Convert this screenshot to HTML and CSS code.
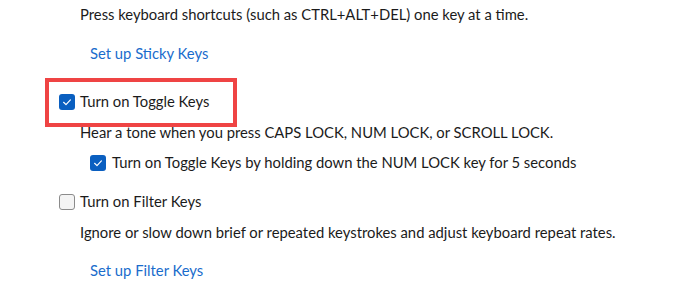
FILE: index.html
```html
<!DOCTYPE html>
<html>
<head>
<meta charset="utf-8">
<link rel="stylesheet" href="styles.css">
</head>
<body>
<div class="page">
  <section class="group">
    <p class="desc first">Press keyboard shortcuts (such as CTRL+ALT+DEL) one key at a time.</p>
    <a class="link link-sticky">Set up Sticky Keys</a>
  </section>

  <section class="group toggle">
    <div class="option title">
      <span class="highlight"></span>
      <span class="box checked"><svg viewBox="0 0 16 16" width="16" height="16"><path d="M4.6 8.3 L7 10.6 L11.4 5.9" fill="none" stroke="#fff" stroke-width="1.2" stroke-linecap="round" stroke-linejoin="round"/></svg></span>
      <span class="label">Turn on Toggle Keys</span>
    </div>
    <p class="desc after-title">Hear a tone when you press CAPS LOCK, NUM LOCK, or SCROLL LOCK.</p>
    <div class="option sub">
      <span class="box checked"><svg viewBox="0 0 16 16" width="16" height="16"><path d="M4.6 8.3 L7 10.6 L11.4 5.9" fill="none" stroke="#fff" stroke-width="1.2" stroke-linecap="round" stroke-linejoin="round"/></svg></span>
      <span class="label">Turn on Toggle Keys by holding down the NUM LOCK key for 5 seconds</span>
    </div>
  </section>

  <section class="group filter">
    <div class="option title">
      <span class="box"></span>
      <span class="label">Turn on Filter Keys</span>
    </div>
    <p class="desc after-title">Ignore or slow down brief or repeated keystrokes and adjust keyboard repeat rates.</p>
    <a class="link link-filter">Set up Filter Keys</a>
  </section>
</div>
</body>
</html>
```

FILE: styles.css
```css
html, body {
  margin: 0;
  padding: 0;
  background: #ffffff;
}

body {
  font-family: "Lato", "Noto Sans", sans-serif;
  font-size: 14.8px;
  line-height: 20px;
  color: #1b1b1b;
}

.page {
  padding: 4px 0 0 0;
  display: flex;
  flex-direction: column;
}

.group {
  display: flex;
  flex-direction: column;
  align-items: flex-start;
}

p {
  margin: 0;
}

.desc {
  padding-left: 80px;
  white-space: nowrap;
}

.link {
  display: block;
  padding-left: 90px;
  color: #1a6ccc;
  text-decoration: none;
  cursor: pointer;
}

.link-sticky {
  margin-top: 19px;
}

.link-filter {
  margin-top: 18px;
}

.toggle {
  margin-top: 28px;
}

.filter {
  margin-top: 19px;
}

.option {
  display: flex;
  align-items: center;
  gap: 5px;
  height: 20px;
  white-space: nowrap;
}

.option.title {
  position: relative;
  margin-left: 59px;
}

.option.sub {
  margin-top: 10px;
  margin-left: 90px;
  gap: 6px;
}

.after-title {
  margin-top: 11px;
}

.box {
  box-sizing: border-box;
  width: 16px;
  height: 16px;
  border-radius: 3px;
  border: 1px solid #8b8b8b;
  background: #f4f4f4;
  display: flex;
  align-items: center;
  justify-content: center;
  flex: none;
  margin-top: 2px;
}

.box.checked {
  border: none;
  background: #0a5fc0;
}

.box svg {
  display: block;
}

.highlight {
  position: absolute;
  left: -14px;
  top: -13px;
  width: 192px;
  height: 49px;
  box-sizing: border-box;
  border: 4px solid #ef4444;
  pointer-events: none;
}
```
